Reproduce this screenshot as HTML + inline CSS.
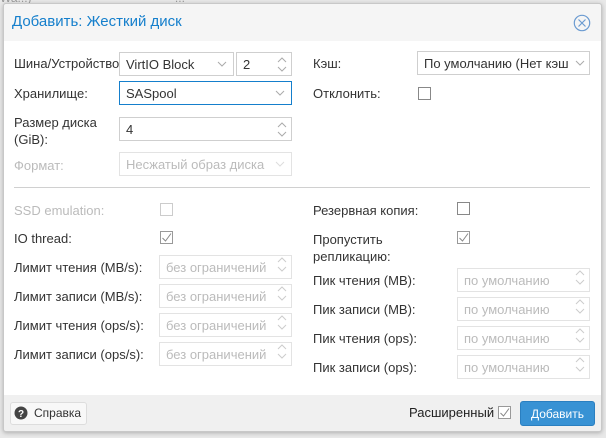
<!DOCTYPE html>
<html><head><meta charset="utf-8"><style>
*{box-sizing:border-box}
body{margin:0;width:606px;height:438px;background:#e8e8e8;font-family:"Liberation Sans",Arial,sans-serif;font-size:13px;color:#333;position:relative;overflow:hidden}
.bgtxt{position:absolute;top:-9px;left:0;width:606px;height:14px;color:#999;font-size:12px}
.dlg{position:absolute;left:3px;top:3px;width:599px;height:429px;background:#fff;border:1px solid #ccc;border-radius:3px;box-shadow:0 1px 4px rgba(0,0,0,.25);overflow:hidden}
.hdr{position:absolute;left:0;top:0;width:100%;height:37px;background:#f5f5f5}
.title{position:absolute;left:8px;top:9px;font-size:15px;color:#157fcc}
.a{position:absolute}
.l{position:absolute;white-space:nowrap}
.d{color:#bbb}
.f{position:absolute;height:24px;border:1px solid #cfcfcf;background:#fff;padding:4px 0 0 6px;white-space:nowrap;overflow:hidden}
.f.dis{color:#bbb;border-color:#e3e3e3}
.arr{position:absolute;right:6px;top:6px;width:10px;height:10px}
.cb{position:absolute;width:13px;height:13px;border:1px solid #888;background:#fff}
.cb.dis{border-color:#ccc}
.cb svg{position:absolute;left:0;top:0}
.sp{position:absolute;right:0;top:0;width:20px;height:22px;background:#fff}
</style></head><body>
<div class="bgtxt">Wa...)&nbsp;&nbsp;&nbsp;&nbsp;&nbsp;&nbsp;&nbsp;&nbsp;&nbsp;&nbsp;&nbsp;&nbsp;&nbsp;&nbsp;&nbsp;&nbsp;&nbsp;&nbsp;&nbsp;&nbsp;&nbsp;&nbsp;&nbsp;&nbsp;&nbsp;&nbsp;&nbsp;&nbsp;&nbsp;&nbsp;&nbsp;&nbsp;&nbsp;&nbsp;&nbsp;&nbsp;&nbsp;&nbsp;&nbsp;&nbsp;&nbsp;&nbsp; ...</div>
<div class="dlg">
<div class="hdr"><div class="title">Добавить: Жесткий диск</div>
<svg class="a" style="left:569px;top:10px" width="18" height="18" viewBox="0 0 18 18"><circle cx="9" cy="9" r="7.7" fill="none" stroke="#6b9bd1" stroke-width="1.2"/><path d="M5.5 5.5L12.5 12.5M12.5 5.5L5.5 12.5" stroke="#6b9bd1" stroke-width="1.2"/></svg></div>
</div>
<div class="l" style="left:14px;top:56px">Шина/Устройство</div>
<div class="f" style="left:119px;top:52px;width:115px;height:24px">VirtIO Block<svg class="arr" viewBox="0 0 10 10"><path d="M1 3L5 7L9 3" fill="none" stroke="#aaa"/></svg></div>
<div class="f" style="left:236px;top:52px;width:56px;height:24px">2<svg class="a" style="right:4px;top:3px" width="10" height="17" viewBox="0 0 10 17"><path d="M1 6L5 2L9 6M1 11L5 15L9 11" fill="none" stroke="#aaa"/></svg></div>
<div class="l" style="left:14px;top:86px">Хранилище:</div>
<div class="f" style="left:119px;top:81px;width:173px;border-color:#157fcc">SASpool<svg class="arr" viewBox="0 0 10 10"><path d="M1 3L5 7L9 3" fill="none" stroke="#aaa"/></svg></div>
<div class="l" style="left:14px;top:114px;line-height:17px">Размер диска<br>(GiB):</div>
<div class="f" style="left:119px;top:117px;width:173px">4<svg class="a" style="right:4px;top:3px" width="10" height="17" viewBox="0 0 10 17"><path d="M1 6L5 2L9 6M1 11L5 15L9 11" fill="none" stroke="#aaa"/></svg></div>
<div class="l d" style="left:14px;top:158px">Формат:</div>
<div class="f dis" style="left:119px;top:152px;width:173px">Несжатый образ диска<svg class="arr" viewBox="0 0 10 10"><path d="M1 3L5 7L9 3" fill="none" stroke="#ddd"/></svg></div>

<div class="l" style="left:313px;top:56px">Кэш:</div>
<div class="f" style="left:417px;top:51px;width:173px">По умолчанию (Нет кэш<svg class="arr" style="background:#fff;width:16px;right:1px;height:18px;top:2px" viewBox="0 0 16 18"><path d="M4 7L8 11L12 7" fill="none" stroke="#aaa"/></svg></div>
<div class="l" style="left:313px;top:86px">Отклонить:</div>
<div class="cb" style="left:418px;top:87px"></div>

<div class="a" style="left:14px;top:187px;width:576px;height:1px;background:#d0d0d0"></div>

<div class="l d" style="left:14px;top:203px">SSD emulation:</div>
<div class="cb dis" style="left:160px;top:203px"></div>
<div class="l" style="left:14px;top:231px">IO thread:</div>
<div class="cb" style="left:160px;top:231px;border-color:#999"><svg width="11" height="11" viewBox="0 0 11 11"><path d="M1.5 6L4.5 9L10 1.5" fill="none" stroke="#888"/></svg></div>

<div class="l" style="left:14px;top:260px">Лимит чтения (MB/s):</div>
<div class="l" style="left:14px;top:289px">Лимит записи (MB/s):</div>
<div class="l" style="left:14px;top:318px">Лимит чтения (ops/s):</div>
<div class="l" style="left:14px;top:347px">Лимит записи (ops/s):</div>
<div class="f dis" style="left:159px;top:255px;width:133px">без ограничений<div class="sp"></div></div>
<div class="f dis" style="left:159px;top:284px;width:133px">без ограничений<div class="sp"></div></div>
<div class="f dis" style="left:159px;top:313px;width:133px">без ограничений<div class="sp"></div></div>
<div class="f dis" style="left:159px;top:342px;width:133px">без ограничений<div class="sp"></div></div>

<div class="l" style="left:313px;top:203px">Резервная копия:</div>
<div class="cb" style="left:457px;top:202px"></div>
<div class="l" style="left:313px;top:231px;line-height:17px">Пропустить<br>репликацию:</div>
<div class="cb" style="left:457px;top:231px;border-color:#999"><svg width="11" height="11" viewBox="0 0 11 11"><path d="M1.5 6L4.5 9L10 1.5" fill="none" stroke="#888"/></svg></div>

<div class="l" style="left:313px;top:273px">Пик чтения (MB):</div>
<div class="l" style="left:313px;top:302px">Пик записи (MB):</div>
<div class="l" style="left:313px;top:331px">Пик чтения (ops):</div>
<div class="l" style="left:313px;top:360px">Пик записи (ops):</div>
<div class="f dis" style="left:457px;top:268px;width:133px">по умолчанию</div>
<div class="f dis" style="left:457px;top:297px;width:133px">по умолчанию</div>
<div class="f dis" style="left:457px;top:326px;width:133px">по умолчанию</div>
<div class="f dis" style="left:457px;top:355px;width:133px">по умолчанию</div>

<div class="a" style="left:4px;top:395px;width:597px;height:36px;background:#f0f0f0"></div>
<div class="a" style="left:10px;top:402px;width:77px;height:23px;background:#f8f8f8;border:1px solid #ddd;border-radius:3px"></div>
<svg class="a" style="left:14px;top:406px" width="14" height="14" viewBox="0 0 14 14"><circle cx="7" cy="7" r="6.5" fill="#444"/><text x="7" y="11" font-size="10" font-weight="bold" text-anchor="middle" fill="#fff" font-family="Liberation Sans">?</text></svg>
<div class="l" style="left:34px;top:406px;font-size:12px">Справка</div>
<div class="l" style="left:409px;top:405px;font-size:13px;color:#222">Расширенный</div>
<div class="cb" style="left:498px;top:406px;border-color:#999"><svg width="11" height="11" viewBox="0 0 11 11"><path d="M1.5 6L4.5 9L10 1.5" fill="none" stroke="#888"/></svg></div>
<div class="a" style="left:520px;top:401px;width:75px;height:25px;background:#3892d4;border:1px solid #2a7fc0;border-radius:3px;color:#fff;font-size:12px;text-align:center;padding-top:5px">Добавить</div>
<div class="a" style="left:3px;top:3px;width:599px;height:429px;border:1px solid #c8c8c8;border-radius:3px;pointer-events:none"></div>
<svg style="position:absolute;left:0;top:0" width="606" height="438">
<g fill="none" stroke="#ccc">
<path d="M278 262L282 258L286 262M278 267L282 271L286 267"/>
<path d="M278 291L282 287L286 291M278 296L282 300L286 296"/>
<path d="M278 320L282 316L286 320M278 325L282 329L286 325"/>
<path d="M278 349L282 345L286 349M278 354L282 358L286 354"/>
<path d="M576 275L580 271L584 275M576 280L580 284L584 280"/>
<path d="M576 304L580 300L584 304M576 309L580 313L584 309"/>
<path d="M576 333L580 329L584 333M576 338L580 342L584 338"/>
<path d="M576 362L580 358L584 362M576 367L580 371L584 367"/>
</g></svg>
</body></html>
